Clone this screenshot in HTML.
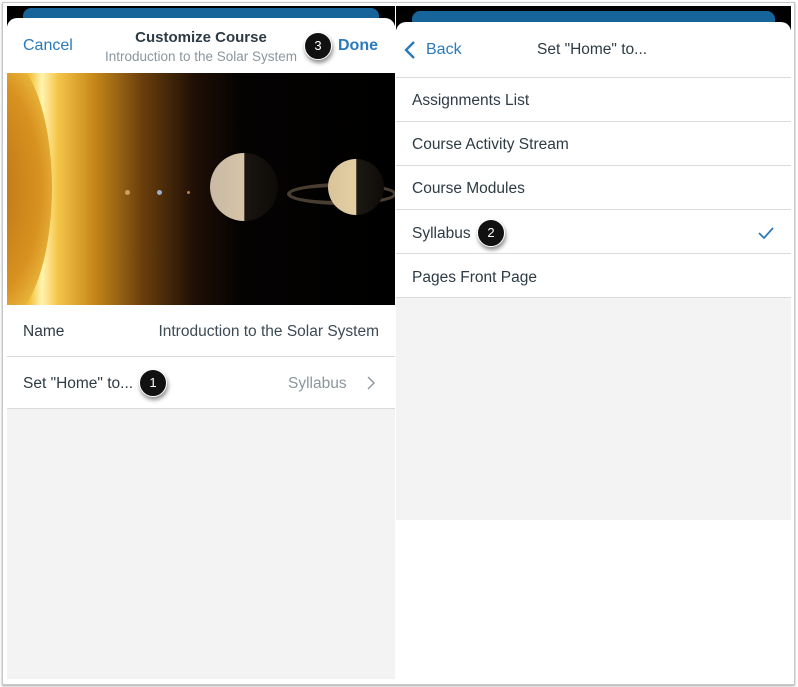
<!DOCTYPE html>
<html><head><meta charset="utf-8"><style>
*{margin:0;padding:0;box-sizing:border-box}
body{width:798px;height:687px;background:#fff;position:relative;overflow:hidden;font-family:"Liberation Sans",sans-serif;color:#2d3b45}
.abs{position:absolute}
.frame{left:2px;top:2px;width:793px;height:683px;border:1px solid #c8c8c8;box-shadow:0 1px 2px rgba(0,0,0,.35)}
.t{position:absolute;white-space:nowrap}
.line{position:absolute;height:1px;background:#d9dbdc}
.badge{position:absolute;width:28px;height:28px;border-radius:50%;background:#111;color:#fff;font-size:13px;text-align:center;line-height:26px;box-shadow:1px 3px 4px rgba(0,0,0,.45);border:1px solid #fff}
</style></head><body>
<div class="abs frame"></div>
<div class="abs" style="left:7px;top:6px;width:388px;height:20px;background:#000"></div>
<div class="abs" style="left:23px;top:8px;width:356px;height:20px;background:#17649b;border-radius:8px 8px 0 0"></div>
<div class="abs" style="left:7px;top:18px;width:388px;height:60px;background:#fff;border-radius:10px 10px 0 0"></div>
<div class="t" style="left:23px;top:37px;font-size:16px;color:#2b7abc">Cancel</div>
<div class="t" style="left:0;width:402px;text-align:center;top:29px;font-size:15px;font-weight:bold;color:#2d3b45">Customize Course</div>
<div class="t" style="left:0;width:402px;text-align:center;top:49px;font-size:13.5px;color:#8b969e">Introduction to the Solar System</div>
<div class="t" style="left:338px;top:37px;font-size:16px;font-weight:bold;color:#2b7abc">Done</div>
<div class="badge" style="left:304px;top:32px">3</div>
<div class="abs" style="left:7px;top:73px;width:388px;height:232px;background:linear-gradient(90deg,#e0a020 0%,#f3c440 6%,#fff4b0 9%,#f5c64a 13%,#c98a1a 22%,#6a3e0c 35%,#201005 48%,#050302 60%,#000 100%);overflow:hidden">
 <div class="abs" style="left:-60px;top:-20px;width:105px;height:270px;border-radius:50%;background:radial-gradient(ellipse at 30% 50%,#b56c10,#d89220 60%,#f6d050 90%)"></div>
 <div class="abs" style="left:203px;top:80px;width:68px;height:68px;border-radius:50%;background:linear-gradient(90deg,#c9b9a4 0%,#d7c4a8 50%,#1a1510 51%,#0d0a08 100%)"></div>
 <div class="abs" style="left:280px;top:110px;width:110px;height:22px;border-radius:50%;border:4px solid #4a3e32"></div>
 <div class="abs" style="left:321px;top:86px;width:56px;height:56px;border-radius:50%;background:linear-gradient(90deg,#d9c39a 0%,#e4cfa4 50%,#1c1812 51%,#0e0c09 100%)"></div>
 <div class="abs" style="left:118px;top:117px;width:5px;height:5px;border-radius:50%;background:#c9a060"></div>
 <div class="abs" style="left:150px;top:117px;width:5px;height:5px;border-radius:50%;background:#9ab0c8"></div>
 <div class="abs" style="left:180px;top:118px;width:3px;height:3px;border-radius:50%;background:#c08040"></div>
</div>
<div class="abs" style="left:7px;top:305px;width:388px;height:103px;background:#fff"></div>
<div class="t" style="left:23px;top:323px;font-size:15.5px">Name</div>
<div class="t" style="right:419px;top:323px;font-size:15.5px;color:#3d4a54">Introduction to the Solar System</div>
<div class="line" style="left:7px;top:356px;width:388px"></div>
<div class="t" style="left:23px;top:375px;font-size:15.5px">Set "Home" to...</div>
<div class="badge" style="left:139px;top:369px">1</div>
<div class="t" style="left:288px;top:375px;font-size:15.5px;color:#8b969e">Syllabus</div>
<svg class="abs" style="left:366px;top:375px" width="10" height="16"><path d="M2 2l6 6-6 6" fill="none" stroke="#8b969e" stroke-width="1.4"/></svg>
<div class="line" style="left:7px;top:408px;width:388px"></div>
<div class="abs" style="left:7px;top:409px;width:388px;height:270px;background:#f2f3f2"></div>
<div class="abs" style="left:396px;top:6px;width:395px;height:24px;background:#000"></div>
<div class="abs" style="left:412px;top:11px;width:363px;height:20px;background:#17649b;border-radius:8px 8px 0 0"></div>
<div class="abs" style="left:396px;top:22px;width:395px;height:56px;background:#fff;border-radius:10px 10px 0 0"></div>
<svg class="abs" style="left:403px;top:40px" width="14" height="20"><path d="M11 2L3 10l8 8" fill="none" stroke="#2b7abc" stroke-width="2.4"/></svg>
<div class="t" style="left:426px;top:41px;font-size:16px;color:#2b7abc">Back</div>
<div class="t" style="left:537px;top:41px;font-size:15.5px">Set "Home" to...</div>
<div class="line" style="left:396px;top:77px;width:395px"></div>
<div class="t" style="left:412px;top:92px;font-size:15.5px">Assignments List</div>
<div class="line" style="left:396px;top:121px;width:395px"></div>
<div class="t" style="left:412px;top:136px;font-size:15.5px">Course Activity Stream</div>
<div class="line" style="left:396px;top:165px;width:395px"></div>
<div class="t" style="left:412px;top:180px;font-size:15.5px">Course Modules</div>
<div class="line" style="left:396px;top:209px;width:395px"></div>
<div class="t" style="left:412px;top:225px;font-size:15.5px">Syllabus</div>
<div class="badge" style="left:477px;top:219px">2</div>
<svg class="abs" style="left:757px;top:226px" width="18" height="14"><path d="M2 7l5 5 9-10" fill="none" stroke="#2b7abc" stroke-width="1.8"/></svg>
<div class="line" style="left:396px;top:253px;width:395px"></div>
<div class="t" style="left:412px;top:269px;font-size:15.5px">Pages Front Page</div>
<div class="line" style="left:396px;top:297px;width:395px"></div>
<div class="abs" style="left:396px;top:298px;width:395px;height:222px;background:#f2f3f2"></div>
</body></html>
